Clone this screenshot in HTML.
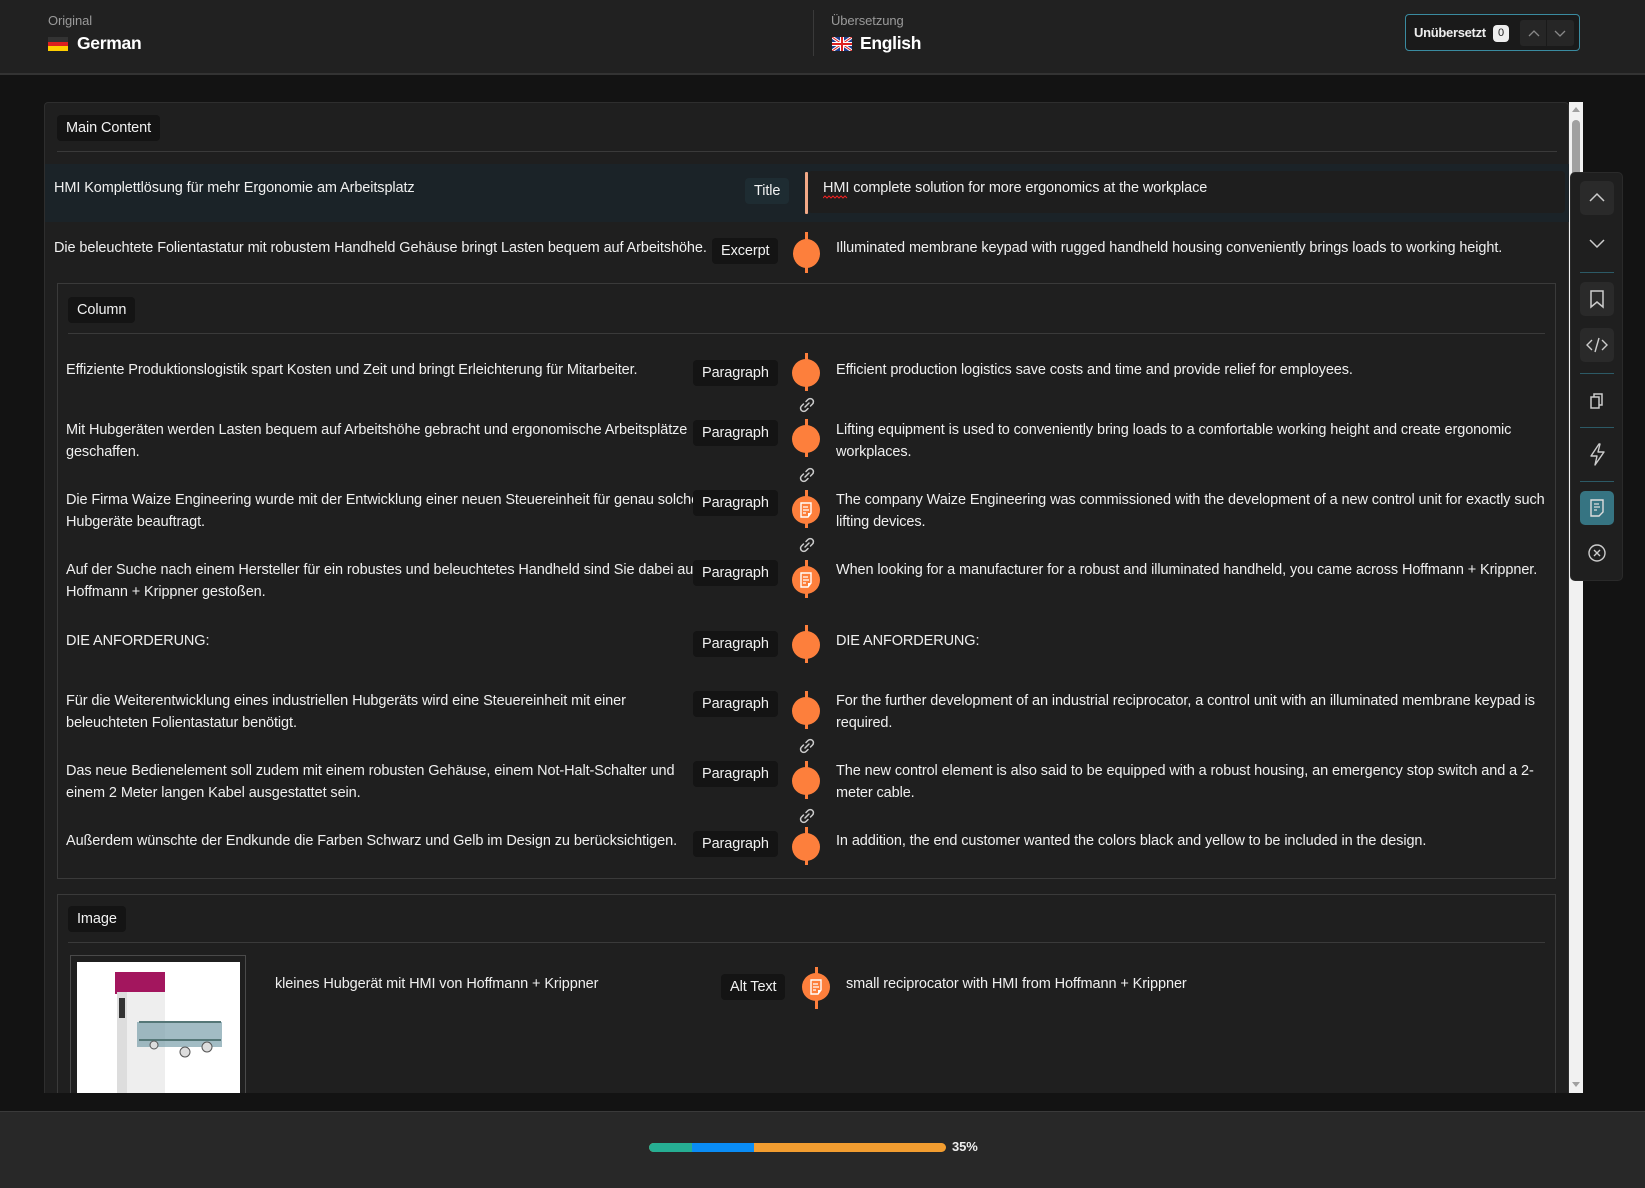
<!DOCTYPE html>
<html><head><meta charset="utf-8">
<style>
*{box-sizing:border-box;margin:0;padding:0}
body{width:1645px;height:1188px;background:#131313;font-family:"Liberation Sans",sans-serif;color:#f0f0f0;position:relative;overflow:hidden;font-size:14px;letter-spacing:-0.1px}
.a{position:absolute}
.tag{position:absolute;background:#141414;border-radius:4px;height:26px;line-height:26px;padding:0 9px;font-size:14.5px;color:#f2f2f2;margin-top:1px}
.t{position:absolute;line-height:21.5px;font-size:14.5px;margin-top:2px}
.dot{position:absolute;width:28px;height:28px;border-radius:50%;background:#fd7f3c}
.ln{position:absolute;width:3px;background:#fd7f3c}
.lk{position:absolute;width:18px;height:18px}
.tb{position:absolute;left:1580px;width:34px;height:34px;border-radius:5px}
.sep{position:absolute;left:1580px;width:34px;height:1px;background:#2c5a66}
</style></head><body>
<!-- header -->
<div class="a" style="left:0;top:0;width:1645px;height:75px;background:#212121;border-bottom:2px solid #333"></div>
<div class="a" style="left:48px;top:13px;font-size:13px;color:#9a9a9a">Original</div>
<div class="a" style="left:48px;top:37px;width:20px;height:14px">
 <div style="height:4.7px;background:#333"></div><div style="height:4.7px;background:#dd1f1f"></div><div style="height:4.6px;background:#ffce00"></div></div>
<div class="a" style="left:77px;top:33px;font-size:17.5px;font-weight:bold;color:#fff;letter-spacing:-0.3px">German</div>
<div class="a" style="left:813px;top:10px;width:1px;height:46px;background:#3a3a3a"></div>
<div class="a" style="left:831px;top:13px;font-size:13px;color:#9a9a9a">Übersetzung</div>
<svg class="a" style="left:832px;top:37px" width="20" height="14" viewBox="0 0 20 14"><rect width="20" height="14" fill="#1f3c8c"/><path d="M0 0L20 14M20 0L0 14" stroke="#fff" stroke-width="3"/><path d="M0 0L20 14M20 0L0 14" stroke="#d22" stroke-width="1"/><path d="M10 0V14M0 7H20" stroke="#fff" stroke-width="4"/><path d="M10 0V14M0 7H20" stroke="#d22" stroke-width="2"/></svg>
<div class="a" style="left:860px;top:33px;font-size:17.5px;font-weight:bold;color:#fff;letter-spacing:-0.3px">English</div>
<div class="a" style="left:1405px;top:14px;width:175px;height:37px;border:1.5px solid #3a8ba0;border-radius:4px;background:#1a1a1a"></div>
<div class="a" style="left:1414px;top:25px;font-size:13px;font-weight:bold;color:#eee;letter-spacing:-0.3px">Unübersetzt</div>
<div class="a" style="left:1493px;top:25px;width:16px;height:17px;border-radius:4px;background:#eee;color:#222;font-size:11px;text-align:center;line-height:17px">0</div>
<div class="a" style="left:1520px;top:20px;width:54px;height:26px;background:#262626;border-radius:3px"></div>
<div class="a" style="left:1546px;top:20px;width:1px;height:26px;background:#1a1a1a"></div>
<svg class="a" style="left:1527px;top:26px" width="40" height="14"><path d="M2 10L7 5L12 10M28 5L33 10L38 5" fill="none" stroke="#888" stroke-width="1.3"/></svg>

<!-- main panel -->
<div class="a" style="left:44px;top:102px;width:1525px;height:991px;background:#1f1f1f;border:1px solid #2e2e2e;border-bottom:none;border-radius:4px 4px 0 0;overflow:hidden">
</div>
<!-- scrollbar -->
<div class="a" style="left:1569px;top:102px;width:14px;height:991px;background:#f1f1f1"></div>
<div class="a" style="left:1572px;top:120px;width:8px;height:60px;background:#a0a0a0;border-radius:4px"></div>
<svg class="a" style="left:1569px;top:104px" width="14" height="10"><path d="M3 8L7 3L11 8Z" fill="#a0a0a0"/></svg>
<svg class="a" style="left:1569px;top:1080px" width="14" height="10"><path d="M3 2L7 7L11 2Z" fill="#a0a0a0"/></svg>

<div class="tag" style="left:57px;top:114px">Main Content</div>
<div class="a" style="left:57px;top:151px;width:1500px;height:1px;background:#3a3a3a"></div>

<!-- title row -->
<div class="a" style="left:45px;top:164px;width:1524px;height:58px;background:#1b2328"></div>
<div class="a" style="left:808px;top:171px;width:757px;height:42px;background:#1e1e1e;border-radius:4px"></div>
<div class="t" style="left:54px;top:176px">HMI Komplettlösung für mehr Ergonomie am Arbeitsplatz</div>
<div class="tag" style="left:745px;top:177px;background:#1e2c32">Title</div>
<div class="a" style="left:805px;top:172px;width:3px;height:42px;background:#f2a987;border-radius:1px"></div>
<div class="t" style="left:823px;top:176px">HMI complete solution for more ergonomics at the workplace</div>
<svg class="a" style="left:823px;top:195px" width="26" height="5"><path d="M0 3L2 1L4 3L6 1L8 3L10 1L12 3L14 1L16 3L18 1L20 3L22 1L24 3" fill="none" stroke="#e22" stroke-width="1"/></svg>

<!-- excerpt -->
<div class="t" style="left:54px;top:236px">Die beleuchtete Folientastatur mit robustem Handheld Gehäuse bringt Lasten bequem auf Arbeitshöhe.</div>
<div class="tag" style="left:712px;top:237px">Excerpt</div>
<div class="ln" style="left:805px;top:232px;height:41px"></div>
<div class="dot" style="left:793px;top:239px;width:27px;height:29px"></div>
<div class="t" style="left:836px;top:236px">Illuminated membrane keypad with rugged handheld housing conveniently brings loads to working height.</div>

<!-- column -->
<div class="a" style="left:57px;top:283px;width:1499px;height:596px;border:1px solid #3a3a3a"></div>
<div class="tag" style="left:68px;top:296px">Column</div>
<div class="a" style="left:68px;top:333px;width:1477px;height:1px;background:#3a3a3a"></div>

<div class="t" style="left:66px;top:358px">Effiziente Produktionslogistik spart Kosten und Zeit und bringt Erleichterung für Mitarbeiter.</div>
<div class="t" style="left:836px;top:358px">Efficient production logistics save costs and time and provide relief for employees.</div>
<div class="t" style="left:66px;top:418px">Mit Hubgeräten werden Lasten bequem auf Arbeitshöhe gebracht und ergonomische Arbeitsplätze<br>geschaffen.</div>
<div class="t" style="left:836px;top:418px">Lifting equipment is used to conveniently bring loads to a comfortable working height and create ergonomic<br>workplaces.</div>
<div class="t" style="left:66px;top:488px">Die Firma Waize Engineering wurde mit der Entwicklung einer neuen Steuereinheit für genau solche<br>Hubgeräte beauftragt.</div>
<div class="t" style="left:836px;top:488px">The company Waize Engineering was commissioned with the development of a new control unit for exactly such<br>lifting devices.</div>
<div class="t" style="left:66px;top:558px">Auf der Suche nach einem Hersteller für ein robustes und beleuchtetes Handheld sind Sie dabei auf<br>Hoffmann + Krippner gestoßen.</div>
<div class="t" style="left:836px;top:558px">When looking for a manufacturer for a robust and illuminated handheld, you came across Hoffmann + Krippner.</div>
<div class="t" style="left:66px;top:629px">DIE ANFORDERUNG:</div>
<div class="t" style="left:836px;top:629px">DIE ANFORDERUNG:</div>
<div class="t" style="left:66px;top:689px">Für die Weiterentwicklung eines industriellen Hubgeräts wird eine Steuereinheit mit einer<br>beleuchteten Folientastatur benötigt.</div>
<div class="t" style="left:836px;top:689px">For the further development of an industrial reciprocator, a control unit with an illuminated membrane keypad is<br>required.</div>
<div class="t" style="left:66px;top:759px">Das neue Bedienelement soll zudem mit einem robusten Gehäuse, einem Not-Halt-Schalter und<br>einem 2 Meter langen Kabel ausgestattet sein.</div>
<div class="t" style="left:836px;top:759px">The new control element is also said to be equipped with a robust housing, an emergency stop switch and a 2-<br>meter cable.</div>
<div class="t" style="left:66px;top:829px">Außerdem wünschte der Endkunde die Farben Schwarz und Gelb im Design zu berücksichtigen.</div>
<div class="t" style="left:836px;top:829px">In addition, the end customer wanted the colors black and yellow to be included in the design.</div>

<div class="tag" style="left:693px;top:359px">Paragraph</div>
<div class="tag" style="left:693px;top:419px">Paragraph</div>
<div class="tag" style="left:693px;top:489px">Paragraph</div>
<div class="tag" style="left:693px;top:559px">Paragraph</div>
<div class="tag" style="left:693px;top:630px">Paragraph</div>
<div class="tag" style="left:693px;top:690px">Paragraph</div>
<div class="tag" style="left:693px;top:760px">Paragraph</div>
<div class="tag" style="left:693px;top:830px">Paragraph</div>

<div class="ln" style="left:805px;top:353px;height:38px"></div><div class="dot" style="left:792px;top:359px"></div>
<div class="ln" style="left:805px;top:419px;height:38px"></div><div class="dot" style="left:792px;top:425px"></div>
<div class="ln" style="left:805px;top:490px;height:38px"></div><div class="dot" style="left:792px;top:496px"></div>
<div class="ln" style="left:805px;top:560px;height:38px"></div><div class="dot" style="left:792px;top:566px"></div>
<div class="ln" style="left:805px;top:625px;height:38px"></div><div class="dot" style="left:792px;top:631px"></div>
<div class="ln" style="left:805px;top:691px;height:38px"></div><div class="dot" style="left:792px;top:697px"></div>
<div class="ln" style="left:805px;top:761px;height:38px"></div><div class="dot" style="left:792px;top:767px"></div>
<div class="ln" style="left:805px;top:827px;height:38px"></div><div class="dot" style="left:792px;top:833px"></div>

<svg class="a" style="left:799px;top:502px" width="14" height="16" viewBox="0 0 14 16"><path d="M2 1H12V11L9 15H2Z" fill="none" stroke="#fff" stroke-width="1.4"/><path d="M4 5H9M4 8H10M4 11H7" stroke="#fff" stroke-width="1.3"/><path d="M9 15V11H12" fill="#fff"/></svg>
<svg class="a" style="left:799px;top:572px" width="14" height="16" viewBox="0 0 14 16"><path d="M2 1H12V11L9 15H2Z" fill="none" stroke="#fff" stroke-width="1.4"/><path d="M4 5H9M4 8H10M4 11H7" stroke="#fff" stroke-width="1.3"/><path d="M9 15V11H12" fill="#fff"/></svg>

<svg class="lk" style="left:798px;top:396px" viewBox="0 0 18 18"><g fill="none" stroke="#ccc" stroke-width="1.5" stroke-linecap="round"><path d="M8 5.5L10 3.5a3 3 0 0 1 4.5 4.5L12.5 10"/><path d="M10 12.5L8 14.5a3 3 0 0 1-4.5-4.5L5.5 8"/><path d="M7 11L11 7"/></g></svg>
<svg class="lk" style="left:798px;top:466px" viewBox="0 0 18 18"><g fill="none" stroke="#ccc" stroke-width="1.5" stroke-linecap="round"><path d="M8 5.5L10 3.5a3 3 0 0 1 4.5 4.5L12.5 10"/><path d="M10 12.5L8 14.5a3 3 0 0 1-4.5-4.5L5.5 8"/><path d="M7 11L11 7"/></g></svg>
<svg class="lk" style="left:798px;top:536px" viewBox="0 0 18 18"><g fill="none" stroke="#ccc" stroke-width="1.5" stroke-linecap="round"><path d="M8 5.5L10 3.5a3 3 0 0 1 4.5 4.5L12.5 10"/><path d="M10 12.5L8 14.5a3 3 0 0 1-4.5-4.5L5.5 8"/><path d="M7 11L11 7"/></g></svg>
<svg class="lk" style="left:798px;top:737px" viewBox="0 0 18 18"><g fill="none" stroke="#ccc" stroke-width="1.5" stroke-linecap="round"><path d="M8 5.5L10 3.5a3 3 0 0 1 4.5 4.5L12.5 10"/><path d="M10 12.5L8 14.5a3 3 0 0 1-4.5-4.5L5.5 8"/><path d="M7 11L11 7"/></g></svg>
<svg class="lk" style="left:798px;top:807px" viewBox="0 0 18 18"><g fill="none" stroke="#ccc" stroke-width="1.5" stroke-linecap="round"><path d="M8 5.5L10 3.5a3 3 0 0 1 4.5 4.5L12.5 10"/><path d="M10 12.5L8 14.5a3 3 0 0 1-4.5-4.5L5.5 8"/><path d="M7 11L11 7"/></g></svg>

<!-- image block -->
<div class="a" style="left:57px;top:894px;width:1499px;height:220px;border:1px solid #3a3a3a"></div>
<div class="tag" style="left:68px;top:905px">Image</div>
<div class="a" style="left:68px;top:942px;width:1477px;height:1px;background:#3a3a3a"></div>
<div class="a" style="left:70px;top:955px;width:176px;height:160px;border:1px solid #4a4a4a;padding:6px">
 <svg width="163" height="145" viewBox="0 0 163 145" style="display:block;background:#fff">
  <rect x="38" y="10" width="50" height="22" fill="#a3165e"/>
  <rect x="40" y="30" width="48" height="115" fill="#eee"/>
  <rect x="40" y="30" width="10" height="115" fill="#ddd"/>
  <rect x="42" y="36" width="6" height="20" fill="#333"/>
  <path d="M60 60H145V85H60Z" fill="#7aa0ab" opacity=".7"/>
  <path d="M62 60H144M62 78H144" stroke="#577" stroke-width="2"/>
  <circle cx="108" cy="90" r="5" fill="#ddd" stroke="#555"/><circle cx="130" cy="85" r="5" fill="#ddd" stroke="#555"/><circle cx="77" cy="83" r="4" fill="#ddd" stroke="#555"/>
 </svg>
</div>
<div class="t" style="left:275px;top:972px">kleines Hubgerät mit HMI von Hoffmann + Krippner</div>
<div class="tag" style="left:721px;top:973px">Alt Text</div>
<div class="ln" style="left:815px;top:967px;height:42px"></div><div class="dot" style="left:802px;top:973px"></div>
<svg class="a" style="left:809px;top:979px" width="14" height="16" viewBox="0 0 14 16"><path d="M2 1H12V11L9 15H2Z" fill="none" stroke="#fff" stroke-width="1.4"/><path d="M4 5H9M4 8H10M4 11H7" stroke="#fff" stroke-width="1.3"/><path d="M9 15V11H12" fill="#fff"/></svg>
<div class="t" style="left:846px;top:972px">small reciprocator with HMI from Hoffmann + Krippner</div>

<div class="a" style="left:0;top:1093px;width:1645px;height:18px;background:#131313"></div>
<div class="a" style="left:0;top:1111px;width:1645px;height:77px;background:#282828;border-top:1px solid #3a3a3a"></div>
<div class="a" style="left:649px;top:1143px;width:297px;height:9px;border-radius:5px;overflow:hidden;background:#f29d30">
 <div class="a" style="left:0;top:0;width:43px;height:9px;background:#26ae93"></div>
 <div class="a" style="left:43px;top:0;width:62px;height:9px;background:#0a8cf5"></div>
</div>
<div class="a" style="left:952px;top:1139px;font-size:13px;font-weight:bold;color:#eee">35%</div>

<!-- right toolbar -->
<div class="a" style="left:1570px;top:172px;width:53px;height:409px;background:#1f1f1f;border-radius:5px;border:1px solid #2a2a2a"></div>
<div class="tb" style="top:181px;background:#2a2a2a"></div>
<svg class="a" style="left:1580px;top:181px" width="34" height="34"><path d="M10 20L17 13L24 20" fill="none" stroke="#ccc" stroke-width="1.5"/></svg>
<svg class="a" style="left:1580px;top:226px" width="34" height="34"><path d="M10 14L17 21L24 14" fill="none" stroke="#ccc" stroke-width="1.5"/></svg>
<div class="sep" style="top:272px"></div>
<div class="tb" style="top:282px;background:#2a2a2a"></div>
<svg class="a" style="left:1580px;top:282px" width="34" height="34"><path d="M11 9H23V25L17 20L11 25Z" fill="none" stroke="#ccc" stroke-width="1.5"/></svg>
<div class="tb" style="top:328px;background:#2a2a2a"></div>
<svg class="a" style="left:1580px;top:328px" width="34" height="34"><path d="M12 12L7 17L12 22M22 12L27 17L22 22M19 10L15 24" fill="none" stroke="#ccc" stroke-width="1.4"/></svg>
<div class="sep" style="top:373px"></div>
<svg class="a" style="left:1580px;top:384px" width="34" height="34"><path d="M11 13H19V24H11Z M14 13V10H22V21H19" fill="none" stroke="#ccc" stroke-width="1.5"/></svg>
<div class="sep" style="top:427px"></div>
<svg class="a" style="left:1580px;top:437px" width="34" height="34"><path d="M19 7L11 19H17L15 28L24 15H18L20 7Z" fill="none" stroke="#ccc" stroke-width="1.4" stroke-linejoin="round"/></svg>
<div class="sep" style="top:481px"></div>
<div class="tb" style="top:491px;background:#367482"></div>
<svg class="a" style="left:1580px;top:491px" width="34" height="34"><path d="M11 9H23V21L19 25H11Z" fill="none" stroke="#ddd" stroke-width="1.4"/><path d="M14 13H19M14 16H20M14 19H17" stroke="#ddd" stroke-width="1.3"/></svg>
<svg class="a" style="left:1580px;top:536px" width="34" height="34"><circle cx="17" cy="17" r="8" fill="none" stroke="#ccc" stroke-width="1.4"/><path d="M14 14L20 20M20 14L14 20" stroke="#ccc" stroke-width="1.4"/></svg>
</body></html>
